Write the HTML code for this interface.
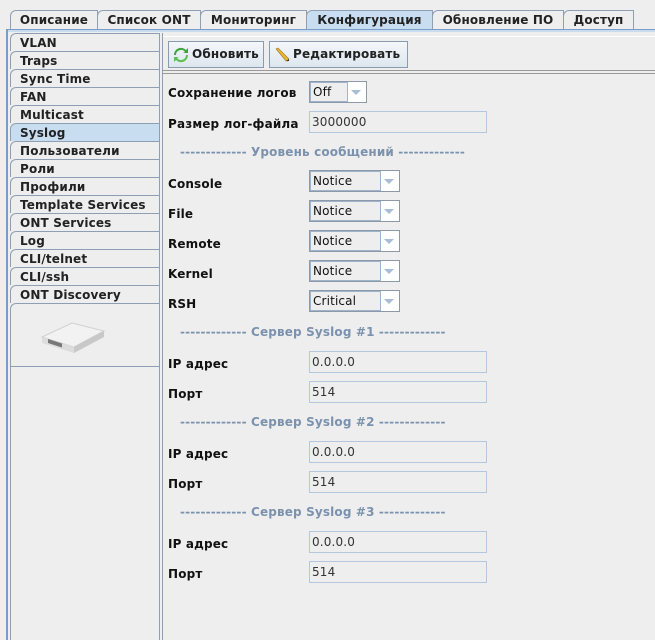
<!DOCTYPE html>
<html><head><meta charset="utf-8"><style>
*{margin:0;padding:0;box-sizing:border-box}
body{width:655px;height:640px;background:#eeeeee;position:relative;overflow:hidden;font-family:"DejaVu Sans","Liberation Sans",sans-serif;font-size:12px;font-weight:bold;color:#111;letter-spacing:0.15px}
.a{position:absolute}
.tab{position:absolute;top:10px;height:19px;border:1px solid #8e9fb3;border-bottom:none;background:#eeeeee;line-height:18px;text-align:center;color:#222;border-top-left-radius:6px 6px}
.tab.sel{background:#c9ddf1;height:20px}
.lt{position:absolute;left:10px;width:150px;height:18px;border-top:1px solid #8e9fb3;border-left:1px solid #8e9fb3;padding-left:9px;line-height:18px;color:#222;border-top-left-radius:6px 6px}
.lt.sel{background:#c9ddf1}
.lbl{position:absolute;left:168px;margin-top:2px}
.fld{position:absolute;left:309px;width:178px;height:22px;border:1px solid #b3c8de;font-weight:normal;color:#333;padding-left:2px;line-height:20px}
.cb{position:absolute;left:309px;width:91px;height:22px;border:1px solid #8d99a6;background:#fff;font-weight:normal}
.cb .t{position:absolute;left:0;top:0;width:71px;height:20px;border:1px solid #9eb4cc;background:#eeeeee;padding-left:2px;line-height:18px;color:#111}
.cb .ar{position:absolute;right:5px;top:8px;width:0;height:0;border-left:5px solid transparent;border-right:5px solid transparent;border-top:5px solid #a9bdd6}
.hd{position:absolute;left:180px;color:#7b92ae;margin-top:1px}
.btn{position:absolute;top:41px;height:27px;border:1px solid #8a9bb0;background:linear-gradient(#f4f7fb,#dde6ef);line-height:25px;color:#222}
</style></head><body>
<div class="tab" style="left:10px;width:88px">Описание</div>
<div class="tab" style="left:97px;width:104px">Список ONT</div>
<div class="tab" style="left:200px;width:107px">Мониторинг</div>
<div class="tab sel" style="left:306px;width:127px">Конфигурация</div>
<div class="tab" style="left:432px;width:132px">Обновление ПО</div>
<div class="tab" style="left:563px;width:71px">Доступ</div>
<div class="a" style="left:6px;top:29px;width:649px;height:3px;background:#c9ddf1;border-top:1px solid #7a9cc8"></div>
<div class="a" style="left:6px;top:29px;width:2px;height:611px;background:#7a9cc8"></div>

<div class="lt" style="top:33px">VLAN</div>
<div class="lt" style="top:51px">Traps</div>
<div class="lt" style="top:69px">Sync Time</div>
<div class="lt" style="top:87px">FAN</div>
<div class="lt" style="top:105px">Multicast</div>
<div class="lt sel" style="top:123px">Syslog</div>
<div class="lt" style="top:141px">Пользователи</div>
<div class="lt" style="top:159px">Роли</div>
<div class="lt" style="top:177px">Профили</div>
<div class="lt" style="top:195px">Template Services</div>
<div class="lt" style="top:213px">ONT Services</div>
<div class="lt" style="top:231px">Log</div>
<div class="lt" style="top:249px">CLI/telnet</div>
<div class="lt" style="top:267px">CLI/ssh</div>
<div class="lt" style="top:285px">ONT Discovery</div>
<div class="a" style="left:10px;top:303px;width:150px;height:64px;border:1px solid #8e9fb3;border-top-left-radius:6px 6px;border-right:none"></div>
<svg class="a" style="left:38px;top:315px" width="70" height="42" viewBox="0 0 70 42">
<polygon points="4,22 34,8 66,16 36,32" fill="#f2f2f2" stroke="#d0d0d0"/>
<polygon points="4,22 36,32 36,38 4,28" fill="#dcdcdc"/>
<polygon points="36,32 66,16 66,22 36,38" fill="#c8c8c8"/>
<rect x="10" y="24" width="14" height="4" fill="#777" transform="skewY(18)" transform-origin="10 24"/>
</svg>
<div class="a" style="left:10px;top:367px;width:150px;height:273px;border-left:1px solid #8e9fb3"></div>
<div class="a" style="left:159px;top:33px;width:4px;height:607px;border-left:1px solid #8e9fb3;border-right:1px solid #8e9fb3"></div>

<div class="a" style="left:163px;top:36px;width:492px;height:1px;background:#fff"></div>
<div class="btn" style="left:168px;width:96px"><svg class="a" style="left:4px;top:5px" width="16" height="16" viewBox="0 0 16 16"><path d="M3 8a5 5 0 0 1 9-3l-2 1h5V1l-2 2A7 7 0 0 0 1 8z" fill="#3fa53a"/><path d="M13 8a5 5 0 0 1-9 3l2-1H1v5l2-2a7 7 0 0 0 12-5z" fill="#5cc04f"/></svg><span style="position:absolute;left:23px">Обновить</span></div>
<div class="btn" style="left:269px;width:139px"><svg class="a" style="left:4px;top:4px" width="16" height="16" viewBox="0 0 16 16"><path d="M2 3l2-1 11 11-1 2-2 0z" fill="#e8b830" stroke="#a07020" stroke-width=".6"/><path d="M12 15l3-2 0 2z" fill="#333"/></svg><span style="position:absolute;left:23px">Редактировать</span></div>
<div class="a" style="left:163px;top:70px;width:492px;height:4px;border-top:1px solid #999;border-bottom:1px solid #999"></div>

<div class="lbl" style="top:84px">Сохранение логов</div>
<div class="cb" style="top:81px;width:58px;"><div class="t" style="width:38px">Off</div><div class="ar"></div></div>
<div class="lbl" style="top:115px">Размер лог-файла</div>
<div class="fld" style="top:111px">3000000</div>
<div class="hd" style="top:144px">------------- Уровень сообщений -------------</div>

<div class="lbl" style="top:175px">Console</div><div class="cb" style="top:170px"><div class="t">Notice</div><div class="ar"></div></div>
<div class="lbl" style="top:205px">File</div><div class="cb" style="top:200px"><div class="t">Notice</div><div class="ar"></div></div>
<div class="lbl" style="top:235px">Remote</div><div class="cb" style="top:230px"><div class="t">Notice</div><div class="ar"></div></div>
<div class="lbl" style="top:265px">Kernel</div><div class="cb" style="top:260px"><div class="t">Notice</div><div class="ar"></div></div>
<div class="lbl" style="top:295px">RSH</div><div class="cb" style="top:290px"><div class="t">Critical</div><div class="ar"></div></div>

<div class="hd" style="top:324px">------------- Сервер Syslog #1 -------------</div>
<div class="lbl" style="top:355px">IP адрес</div><div class="fld" style="top:351px">0.0.0.0</div>
<div class="lbl" style="top:385px">Порт</div><div class="fld" style="top:381px">514</div>
<div class="hd" style="top:414px">------------- Сервер Syslog #2 -------------</div>
<div class="lbl" style="top:445px">IP адрес</div><div class="fld" style="top:441px">0.0.0.0</div>
<div class="lbl" style="top:475px">Порт</div><div class="fld" style="top:471px">514</div>
<div class="hd" style="top:504px">------------- Сервер Syslog #3 -------------</div>
<div class="lbl" style="top:535px">IP адрес</div><div class="fld" style="top:531px">0.0.0.0</div>
<div class="lbl" style="top:565px">Порт</div><div class="fld" style="top:561px">514</div>
</body></html>
